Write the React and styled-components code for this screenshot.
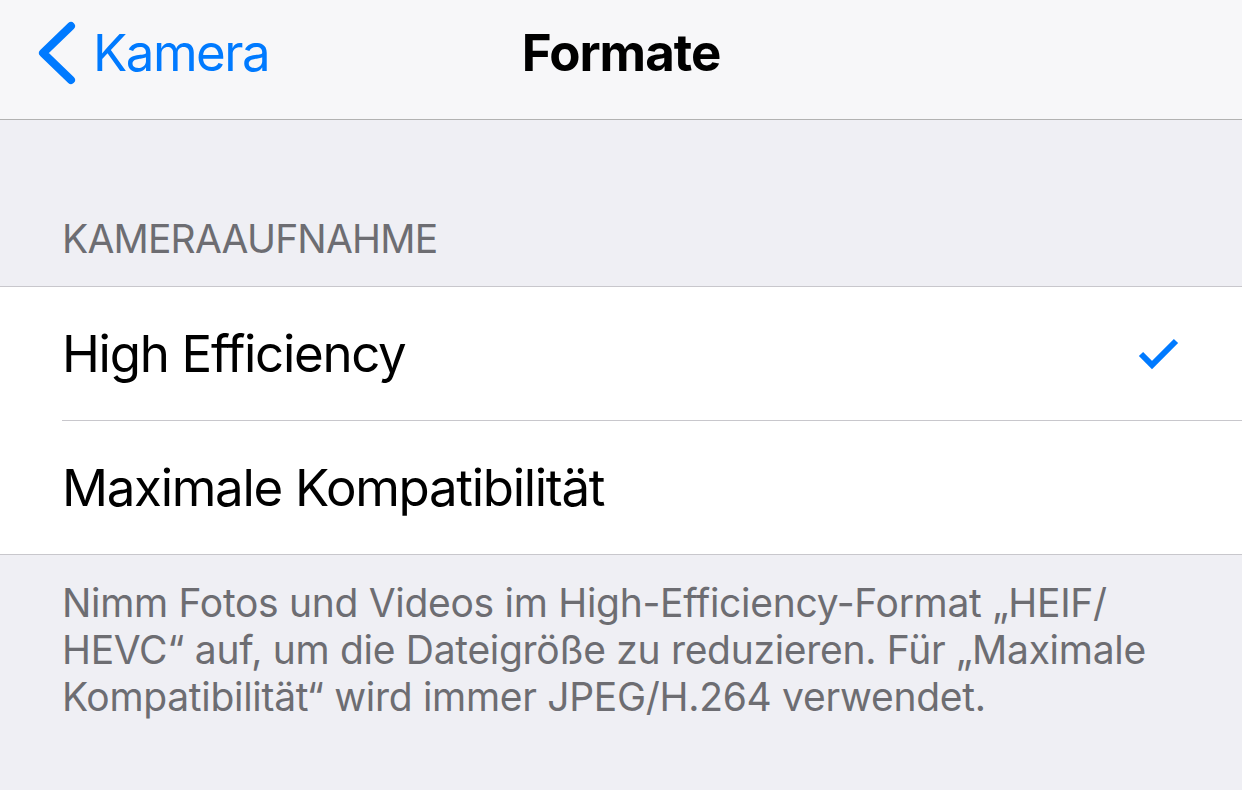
import React from "react";
import styled, { createGlobalStyle } from "styled-components";

const Global = createGlobalStyle`
  html, body { margin: 0; padding: 0; background: #efeff4; }
  body { font-family: Inter, "Noto Sans", sans-serif; -webkit-font-smoothing: antialiased; }
`;

const Page = styled.div`
  width: 1242px;
  height: 790px;
  background: #efeff4;
  display: flex;
  flex-direction: column;
  overflow: hidden;
`;

const NavBar = styled.header`
  height: 120px;
  box-sizing: border-box;
  padding-bottom: 14px;
  flex: none;
  background: #f7f7f9;
  border-bottom: 1px solid #b2b2b2;
  display: grid;
  grid-template-columns: 1fr auto 1fr;
  align-items: center;
`;

const BackButton = styled.div`
  display: flex;
  align-items: center;
  gap: 17px;
  padding-left: 38px;
  color: #007aff;
  font-size: 51px;
  letter-spacing: -1.5px;
`;

const Title = styled.h1`
  margin: 0;
  font-size: 51px;
  font-weight: 700;
  color: #000;
  letter-spacing: -1px;
`;

const SectionHeader = styled.div`
  height: 166px;
  box-sizing: border-box;
  padding: 0 62px 24px;
  display: flex;
  align-items: flex-end;
  color: #6d6d72;
  font-size: 39px;
  letter-spacing: -0.8px;
`;

const Group = styled.div`
  background: #fff;
  border-top: 1px solid #c8c7cc;
  border-bottom: 1px solid #c8c7cc;
  padding-left: 62px;
`;

const Row = styled.div`
  height: 133px;
  display: flex;
  align-items: center;
  justify-content: space-between;
  padding-right: 62px;
  font-size: 51px;
  color: #000;
  letter-spacing: -1.3px;
  border-top: ${(p) => (p.$first ? "none" : "1px solid #c8c7cc")};
`;

const Footer = styled.p`
  margin: 0;
  padding: 24px 62px 0;
  color: #6d6d72;
  font-size: 39px;
  line-height: 47px;
  letter-spacing: -0.3px;
`;

const Chevron = () => (
  <svg width="38" height="64" viewBox="0 0 38 64">
    <path d="M33 5 L5 32 L33 59" fill="none" stroke="#007aff" strokeWidth="8" strokeLinecap="round" strokeLinejoin="round" />
  </svg>
);

const Check = () => (
  <svg width="42" height="36" viewBox="0 0 42 36">
    <path d="M3 18 L14 29 L38 5" fill="none" stroke="#007aff" strokeWidth="6" />
  </svg>
);

export default function App() {
  return (
    <Page>
      <Global />
      <NavBar>
        <BackButton>
          <Chevron />
          <span>Kamera</span>
        </BackButton>
        <Title>Formate</Title>
        <div />
      </NavBar>
      <SectionHeader>KAMERAAUFNAHME</SectionHeader>
      <Group>
        <Row $first>
          <span>High Efficiency</span>
          <Check />
        </Row>
        <Row>
          <span>Maximale Kompatibilität</span>
        </Row>
      </Group>
      <Footer>
        Nimm Fotos und Videos im High-Efficiency-Format „HEIF/
        <br />
        HEVC“ auf, um die Dateigröße zu reduzieren. Für „Maximale
        <br />
        Kompatibilität“ wird immer JPEG/H.264 verwendet.
      </Footer>
    </Page>
  );
}
